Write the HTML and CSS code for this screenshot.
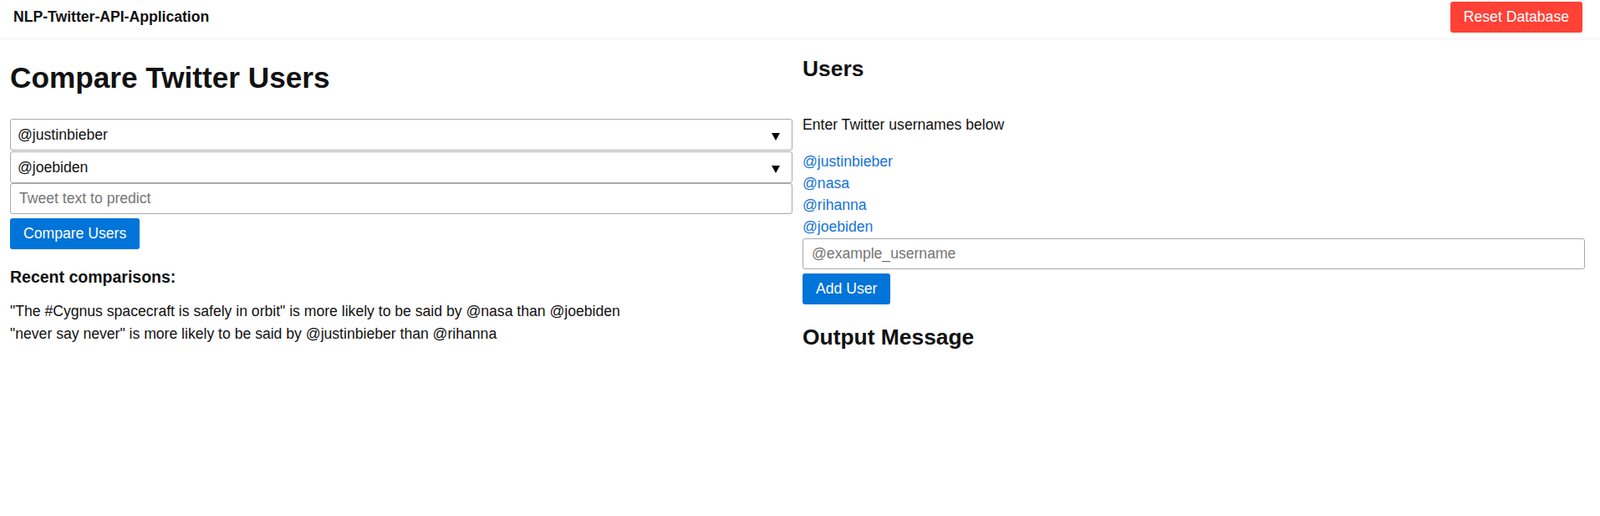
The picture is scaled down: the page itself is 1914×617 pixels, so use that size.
FILE: index.html
```html
<!DOCTYPE html>
<html lang="en">
<head>
<meta charset="utf-8">
<title>NLP-Twitter-API-Application</title>
<link rel="stylesheet" href="styles.css">
</head>
<body>
<header class="topbar">
  <span class="brand">NLP-Twitter-API-Application</span>
  <button class="btn btn-red" type="button">Reset Database</button>
</header>
<main class="layout">
  <section class="col">
    <h1 class="page-title">Compare Twitter Users</h1>
    <form class="compare-form">
      <div class="select-wrap first">
        <select class="field select">
          <option>@justinbieber</option>
          <option>@nasa</option>
          <option>@rihanna</option>
          <option>@joebiden</option>
        </select>
      </div>
      <div class="select-wrap">
        <select class="field select">
          <option>@joebiden</option>
          <option>@justinbieber</option>
          <option>@nasa</option>
          <option>@rihanna</option>
        </select>
      </div>
      <input class="field text-field" type="text" placeholder="Tweet text to predict">
      <button class="btn btn-blue" type="button">Compare Users</button>
    </form>
    <h3 class="sub-title">Recent comparisons:</h3>
    <div class="comparisons">
      <div class="comparison">"The #Cygnus spacecraft is safely in orbit" is more likely to be said by @nasa than @joebiden</div>
      <div class="comparison">"never say never" is more likely to be said by @justinbieber than @rihanna</div>
    </div>
  </section>
  <section class="col">
    <h2 class="section-title">Users</h2>
    <p class="hint">Enter Twitter usernames below</p>
    <div class="user-list">
      <a class="user-link" href="#">@justinbieber</a>
      <a class="user-link" href="#">@nasa</a>
      <a class="user-link" href="#">@rihanna</a>
      <a class="user-link" href="#">@joebiden</a>
    </div>
    <input class="field text-field user-input" type="text" placeholder="@example_username">
    <button class="btn btn-blue add-btn" type="button">Add User</button>
    <h2 class="section-title output-title">Output Message</h2>
  </section>
</main>
</body>
</html>
```
FILE: styles.css
```css
* {
  box-sizing: border-box;
}

html, body {
  margin: 0;
  padding: 0;
  background: #ffffff;
}

body {
  font-family: "Liberation Sans", Arial, Helvetica, sans-serif;
  font-size: 17.6px;
  color: #111111;
}

.topbar {
  height: 47px;
  display: flex;
  align-items: flex-start;
  justify-content: space-between;
  padding: 2px 21px 0 16px;
  border-bottom: 1px solid #f0f0f0;
}

.brand {
  font-weight: bold;
  font-size: 17.6px;
  line-height: 37px;
  color: #111111;
}

.btn {
  font-family: "Liberation Sans", Arial, Helvetica, sans-serif;
  font-size: 17.6px;
  height: 37px;
  padding: 0 16px;
  border: none;
  border-radius: 3px;
  color: #ffffff;
  cursor: pointer;
  line-height: 37px;
  white-space: nowrap;
}

.btn-red {
  background: #ff4136;
}

.btn-blue {
  background: #0074d9;
}

.layout {
  display: flex;
  gap: 12px;
  padding: 0 18px 0 12px;
}

.col {
  flex: 1 1 0;
  min-width: 0;
}

.page-title {
  font-size: 35.2px;
  line-height: 40px;
  font-weight: bold;
  margin: 26px 0 29px;
}

.compare-form {
  display: flex;
  flex-direction: column;
  align-items: flex-start;
}

.select-wrap {
  position: relative;
  width: 100%;
}

.select-wrap.first {
  margin-bottom: 1px;
}

.select-wrap::after {
  content: "";
  position: absolute;
  right: 15px;
  top: 17px;
  width: 0;
  height: 0;
  border-left: 5px solid transparent;
  border-right: 5px solid transparent;
  border-top: 9px solid #000000;
  pointer-events: none;
}

.field {
  display: block;
  width: 100%;
  font-family: "Liberation Sans", Arial, Helvetica, sans-serif;
  font-size: 17.6px;
  color: #111111;
  background: #ffffff;
  border: 1px solid #a9a9a9;
  border-radius: 3px;
  outline: none;
}

.select {
  height: 38px;
  padding: 0 30px 0 8px;
  appearance: none;
  -webkit-appearance: none;
}

.text-field {
  height: 37px;
  padding: 0 10px;
}

.text-field::placeholder {
  color: #757575;
}

.compare-form .btn-blue {
  margin-top: 5px;
}

.sub-title {
  font-size: 19.5px;
  line-height: 22px;
  font-weight: bold;
  margin: 22px 0 17px;
}

.comparisons {
  line-height: 27px;
}

.section-title {
  font-size: 26.4px;
  line-height: 30px;
  font-weight: bold;
  margin: 20px 0 0;
}

.hint {
  line-height: 20px;
  margin: 42px 0 0;
}

.user-list {
  display: flex;
  flex-direction: column;
  align-items: flex-start;
  margin-top: 21px;
  line-height: 26px;
}

.user-link {
  color: #1473d6;
  text-decoration: none;
}

.user-input {
  margin-top: 1px;
}

.add-btn {
  margin-top: 5px;
  display: block;
}

.output-title {
  margin-top: 24px;
}
```
